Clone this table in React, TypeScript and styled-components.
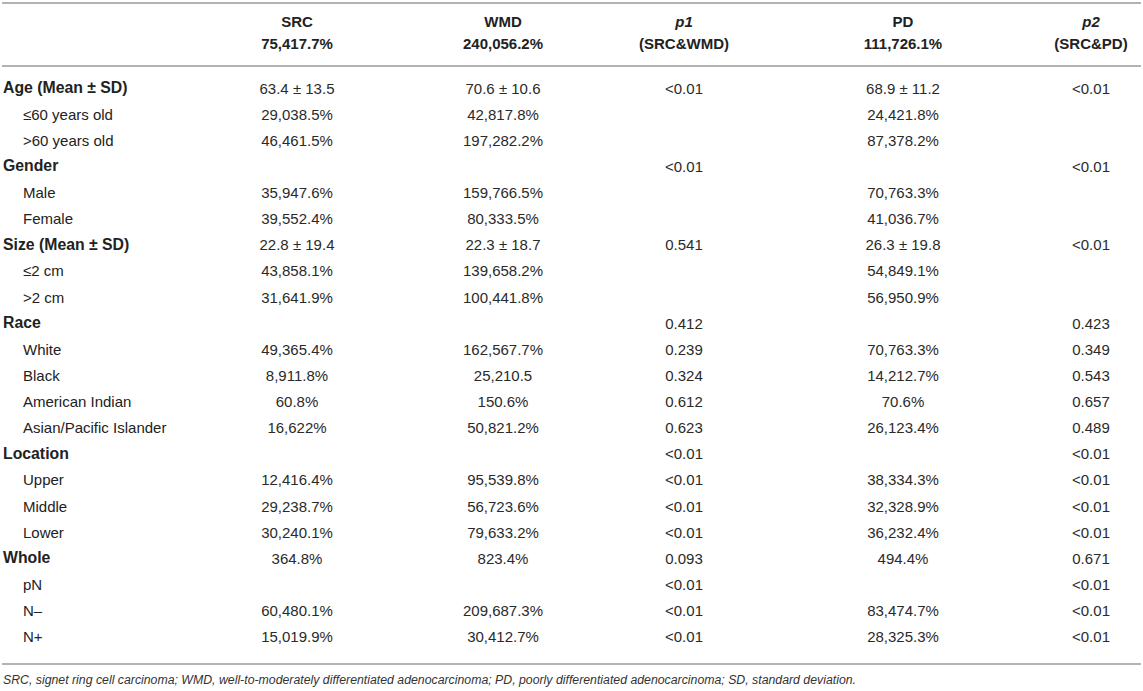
import React from "react";
import styled, { createGlobalStyle } from "styled-components";

const GlobalStyle = createGlobalStyle`
  html, body { margin: 0; padding: 0; background: #fff; }
  body { font-family: "Liberation Sans", Arial, Helvetica, sans-serif; color: #222; }
`;

const COLS = "198px 194px 218px 144px 294px 82px";

const Page = styled.div`
  width: 1143px;
  box-sizing: border-box;
  padding: 2px 2px 0 2px;
`;

const Table = styled.div`
  border-top: 2px solid #b3b3b3;
  border-bottom: 2px solid #b3b3b3;
`;

const Head = styled.div`
  display: grid;
  grid-template-columns: ${COLS};
  padding: 7px 0 10px;
  border-bottom: 2px solid #b3b3b3;
`;

const HeadCell = styled.div`
  font-size: 15px;
  font-weight: bold;
  line-height: 22px;
  text-align: center;
  color: #222;
`;

const Em = styled.span`
  font-style: italic;
`;

const Body = styled.div`
  padding: 8px 0 13px;
`;

const Row = styled.div`
  display: grid;
  grid-template-columns: ${COLS};
  height: 26.14px;
  align-items: center;
`;

const Label = styled.div<{ $bold?: boolean; $indent?: boolean }>`
  padding-left: ${(p) => (p.$indent ? "21px" : "1px")};
  font-size: ${(p) => (p.$bold ? "15.8px" : "15px")};
  font-weight: ${(p) => (p.$bold ? "bold" : "normal")};
  white-space: nowrap;
  color: #222;
`;

const Cell = styled.div`
  font-size: 15px;
  text-align: center;
  white-space: nowrap;
  color: #2a2a2a;
`;

const Note = styled.div`
  padding: 6px 0 0 1px;
  font-size: 12.3px;
  font-style: italic;
  line-height: 18px;
  color: #333;
  white-space: nowrap;
`;

type R = [string, boolean, string, string, string, string, string];

const rows: R[] = [
  ["Age (Mean ± SD)", true, "63.4 ± 13.5", "70.6 ± 10.6", "<0.01", "68.9 ± 11.2", "<0.01"],
  ["≤60 years old", false, "29,038.5%", "42,817.8%", "", "24,421.8%", ""],
  [">60 years old", false, "46,461.5%", "197,282.2%", "", "87,378.2%", ""],
  ["Gender", true, "", "", "<0.01", "", "<0.01"],
  ["Male", false, "35,947.6%", "159,766.5%", "", "70,763.3%", ""],
  ["Female", false, "39,552.4%", "80,333.5%", "", "41,036.7%", ""],
  ["Size (Mean ± SD)", true, "22.8 ± 19.4", "22.3 ± 18.7", "0.541", "26.3 ± 19.8", "<0.01"],
  ["≤2 cm", false, "43,858.1%", "139,658.2%", "", "54,849.1%", ""],
  [">2 cm", false, "31,641.9%", "100,441.8%", "", "56,950.9%", ""],
  ["Race", true, "", "", "0.412", "", "0.423"],
  ["White", false, "49,365.4%", "162,567.7%", "0.239", "70,763.3%", "0.349"],
  ["Black", false, "8,911.8%", "25,210.5", "0.324", "14,212.7%", "0.543"],
  ["American Indian", false, "60.8%", "150.6%", "0.612", "70.6%", "0.657"],
  ["Asian/Pacific Islander", false, "16,622%", "50,821.2%", "0.623", "26,123.4%", "0.489"],
  ["Location", true, "", "", "<0.01", "", "<0.01"],
  ["Upper", false, "12,416.4%", "95,539.8%", "<0.01", "38,334.3%", "<0.01"],
  ["Middle", false, "29,238.7%", "56,723.6%", "<0.01", "32,328.9%", "<0.01"],
  ["Lower", false, "30,240.1%", "79,633.2%", "<0.01", "36,232.4%", "<0.01"],
  ["Whole", true, "364.8%", "823.4%", "0.093", "494.4%", "0.671"],
  ["pN", false, "", "", "<0.01", "", "<0.01"],
  ["N–", false, "60,480.1%", "209,687.3%", "<0.01", "83,474.7%", "<0.01"],
  ["N+", false, "15,019.9%", "30,412.7%", "<0.01", "28,325.3%", "<0.01"],
];

export default function App() {
  return (
    <Page>
      <GlobalStyle />
      <Table>
        <Head>
          <HeadCell />
          <HeadCell>
            SRC
            <br />
            75,417.7%
          </HeadCell>
          <HeadCell>
            WMD
            <br />
            240,056.2%
          </HeadCell>
          <HeadCell>
            <Em>p1</Em>
            <br />
            (SRC&amp;WMD)
          </HeadCell>
          <HeadCell>
            PD
            <br />
            111,726.1%
          </HeadCell>
          <HeadCell>
            <Em>p2</Em>
            <br />
            (SRC&amp;PD)
          </HeadCell>
        </Head>
        <Body>
          {rows.map(([label, bold, a, b, c, d, e]) => (
            <Row key={label}>
              <Label $bold={bold} $indent={!bold}>
                {label}
              </Label>
              <Cell>{a}</Cell>
              <Cell>{b}</Cell>
              <Cell>{c}</Cell>
              <Cell>{d}</Cell>
              <Cell>{e}</Cell>
            </Row>
          ))}
        </Body>
      </Table>
      <Note>
        SRC, signet ring cell carcinoma; WMD, well-to-moderately differentiated adenocarcinoma; PD, poorly
        differentiated adenocarcinoma; SD, standard deviation.
      </Note>
    </Page>
  );
}
